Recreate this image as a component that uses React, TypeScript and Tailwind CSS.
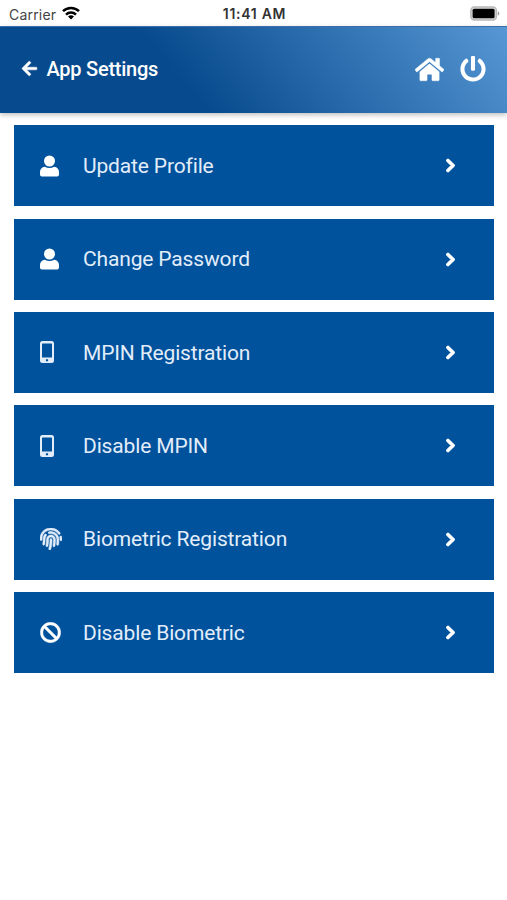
import type { ReactNode } from "react";
import { FaArrowLeft, FaBan, FaChevronRight, FaFingerprint, FaHome, FaPowerOff } from "react-icons/fa";

type SettingItem = {
  label: string;
  icon: ReactNode;
};

function UserIcon() {
  return (
    <svg viewBox="0 0 19 22" className="w-[19px] h-[22px]" fill="#fff">
      <circle cx="9.5" cy="6" r="5.5" />
      <path d="M4.8 11.8c2.800 1.600 6.600 1.600 9.400 0 2.900.2 4.800 2.400 4.800 5.200v2.600c0 1.100-.7 1.800-1.800 1.800H1.800C.7 21.400 0 20.700 0 19.600V17c0-2.800 1.900-5 4.800-5.200z" />
    </svg>
  );
}

function PhoneIcon() {
  return (
    <svg viewBox="0 0 14 22" className="w-[14px] h-[22px]" fill="currentColor">
      <path
        fillRule="evenodd"
        d="M2.5 0h9A2.5 2.5 0 0 1 14 2.5v17a2.5 2.5 0 0 1-2.5 2.500h-9A2.5 2.5 0 0 1 0 19.5v-17A2.5 2.5 0 0 1 2.5 0zM2.600 2.400a.6.6 0 0 0-.6.6v13.600h10V3a.6.6 0 0 0-.6-.6zM5.900 18.200v2h2.200v-2z"
      />
    </svg>
  );
}

const settings: SettingItem[] = [
  { label: "Update Profile", icon: <UserIcon /> },
  { label: "Change Password", icon: <UserIcon /> },
  { label: "MPIN Registration", icon: <PhoneIcon /> },
  { label: "Disable MPIN", icon: <PhoneIcon /> },
  { label: "Biometric Registration", icon: <FaFingerprint className="size-[22px]" strokeWidth={12} /> },
  { label: "Disable Biometric", icon: <FaBan className="size-[21px] text-white" strokeWidth={10} /> },
];

function StatusBar() {
  return (
    <div className="h-[26px] grid grid-cols-3 items-center pl-[9px] pr-[7px] pt-[2px] font-['Inter',sans-serif]">
      <div className="flex items-center gap-[6px]">
        <span className="text-[14px] tracking-[0.2px] text-[#444]">Carrier</span>
        <svg viewBox="0 0 18 14" className="w-[18px] h-[14px] -mt-[3px]">
          <g fill="none" stroke="#000" strokeWidth="2.5">
            <path d="M1 5.2a11.5 11.5 0 0 1 16 0" />
            <path d="M4 8.6a7.2 7.2 0 0 1 10 0" />
          </g>
          <path d="M9 13.4 6 10.6a4.3 4.3 0 0 1 6 0z" fill="#000" />
        </svg>
      </div>
      <span className="text-center text-[14px] font-semibold tracking-[0.7px] -mt-px whitespace-nowrap text-[#333]">
        11:41 AM
      </span>
      <div className="flex justify-end">
        <svg viewBox="0 0 30 15" className="w-[30px] h-[15px] -mt-[2px]">
          <rect x="0.9" y="1" width="25.5" height="13" rx="3.5" fill="#ddd" stroke="#b8b8b8" strokeWidth="1.5" />
          <rect x="2.6" y="2.8" width="22" height="9.4" rx="1.5" fill="#000" />
          <path d="M27.8 5.5c2 .6 2 3.4 0 4z" fill="#999" />
        </svg>
      </div>
    </div>
  );
}

function Header() {
  return (
    <header className="h-[87px] flex items-center pb-[2px] px-[21px] text-white bg-[linear-gradient(50deg,#074a8d_36%,#5797d5_100%)] border-t border-[#3a70a9] shadow-[0_2px_5px_rgba(0,0,0,0.25)]">
      <FaArrowLeft className="size-[17px] -mt-[2px]" strokeWidth={15} />
      <h1 className="ml-[8.5px] text-[20px] font-medium tracking-[-0.24px]">App Settings</h1>
      <div className="ml-auto flex items-center gap-[16px]">
        <FaHome className="size-[29px]" strokeWidth={8} />
        <FaPowerOff className="size-[26px]" />
      </div>
    </header>
  );
}

function SettingRow({ label, icon }: SettingItem) {
  return (
    <button className="h-[81px] w-full flex items-center pl-[26px] pr-[36px] bg-[#00529c] text-[#e3edfa]">
      <span className="w-[43.5px] flex">{icon}</span>
      <span className="pt-[2px] text-[21px] tracking-[-0.15px]">{label}</span>
      <FaChevronRight className="ml-auto size-[15px] text-white" strokeWidth={40} />
    </button>
  );
}

function App() {
  return (
    <div className="min-h-screen bg-white font-['Roboto',sans-serif]">
      <StatusBar />
      <Header />
      <main className="flex flex-col gap-[12.35px] pt-[12.2px] pl-[13.5px] pr-[13px]">
        {settings.map((item) => (
          <SettingRow key={item.label} {...item} />
        ))}
      </main>
    </div>
  );
}

export default App;
